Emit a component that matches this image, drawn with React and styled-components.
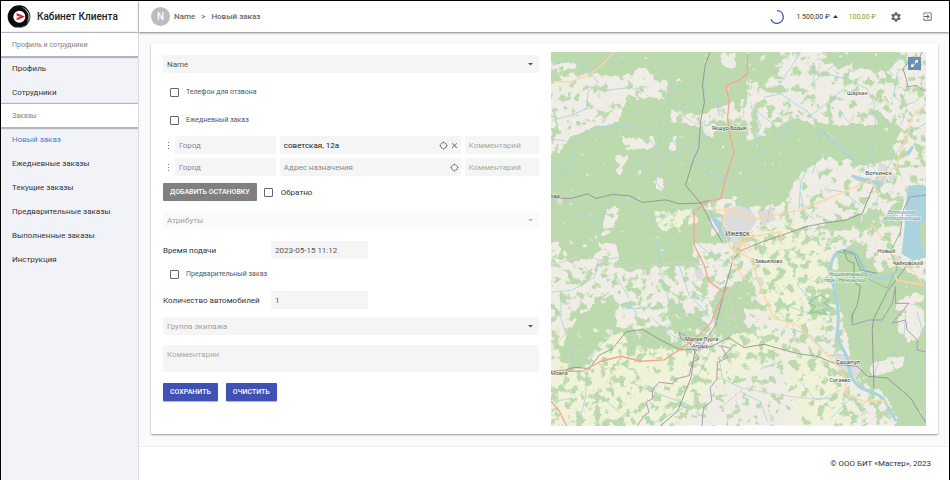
import React, { useState } from 'react'
import styled, { createGlobalStyle, css } from 'styled-components'
import { MdSettings, MdExitToApp, MdLocationSearching, MdClose } from 'react-icons/md'

const sections = [
    { title: 'Профиль и сотрудники', items: ['Профиль', 'Сотрудники'] },
    {
        title: 'Заказы',
        items: [
            'Новый заказ',
            'Ежедневные заказы',
            'Текущие заказы',
            'Предварительные заказы',
            'Выполненные заказы',
            'Инструкция',
        ],
    },
]

function Logo() {
    return (
        <svg width="24" height="24" viewBox="0 0 72 72" aria-hidden="true">
            <circle cx="36" cy="35" r="34" fill="#0c0c0c" />
            <path d="M46 7a31 31 0 0 1 18 19M64 24a30 30 0 0 1-3 31M56 13a29 29 0 0 1 6 34M54 63a33 33 0 0 1-26 4" fill="none" stroke="#fff" strokeWidth="1.6" />
            <circle cx="37" cy="35" r="18" fill="#fff" />
            <path d="M29 24l25 11-25 11z" fill="#e3202c" />
            <path d="M29 32l11 3-11 4z" fill="#fff" />
        </svg>
    )
}

function Caret({ up }) {
    return (
        <svg width="5" height="3" viewBox="0 0 10 6" aria-hidden="true">
            <path d={up ? 'M0 6l5-6 5 6z' : 'M0 0l5 5 5-5z'} fill="currentColor" />
        </svg>
    )
}

function Map() {
    return (
        <MapBox>
            <svg viewBox="0 0 1128 1122" preserveAspectRatio="xMidYMid slice" role="img" aria-label="Карта">
                <defs>
                    {/* grey level = how dense the wood is, noise makes the ragged edges */}
                    <filter id="wood" x="0" y="0" width="100%" height="100%" colorInterpolationFilters="sRGB">
                        <feGaussianBlur in="SourceGraphic" stdDeviation="5" />
                        <feColorMatrix values="0 0 0 0 0  0 0 0 0 0  0 0 0 0 0  1 0 0 0 0" result="density" />
                        <feTurbulence type="fractalNoise" baseFrequency="0.04" numOctaves="5" seed="8" result="noise" />
                        <feComposite in="density" in2="noise" operator="arithmetic" k2="0.9" k3="1.4" k4="-0.35" result="sum" />
                        <feComponentTransfer in="sum" result="mask">
                            <feFuncA type="linear" slope="7" intercept="-4.8" />
                        </feComponentTransfer>
                        <feFlood floodColor="#bcdaae" />
                        <feComposite in2="mask" operator="in" />
                    </filter>
                    <filter id="soft"><feGaussianBlur stdDeviation="14" /></filter>
                </defs>
                <rect width="1128" height="1122" fill="#f0ede6" />
                <g fill="#f0f2d9" filter="url(#soft)">
                    <path d="M0 840l200-20 250 60 200-60 60 60-60 60-200 90-100 92H0z" />
                    <path d="M600 540l140-30 90 90 20 200-60 60-130-60-60-160z" />
                    <path d="M300 490l120-20 20 60-110 20zM700 900h140l80 220H740z" />
                </g>
                <g filter="url(#wood)">
                    <rect width="1128" height="1122" fill="#585858" />
                    <g transform="translate(-15 -19)">
                        <path d="M0 0h600v590H0z" fill="#f4f4f4" />
                        <path d="M0 45l60 0 40 20-20 30-64 5z" fill="#707070" />
                        <path d="M0 115l120-35 110 10 60-30 50 50-30 50-70 10-20 60-90 20-60 30-30 50H0z" fill="#404040" />
                        <path d="M375 190l90 15 130-50v80l-80 5-20 50-30-45-90-15z" fill="#4c4c4c" />
                        <path d="M230 280l90-10 5 35-90 10zM205 330l45 0-30 70zM330 395l25 0-5 45-20-10zM375 270l20 0-5 50-20 0zM520 20l50 0v50l-40-10zM100 420l20 5-15 25z" fill="#202020" />
                        <path d="M180 490l60-10-50 90h-30zM320 500l120-10 20 40-120 30zM480 470l120-20v120H500zM340 95l30 20-10 45-70-5z" fill="#4c4c4c" />
                    </g>
                    <g transform="translate(570 -19)">
                        <path d="M20 20h100l-10 70-50 30-40-10zM250 20h230l-40 60-120-20-70-10z" fill="#d0d0d0" />
                        <path d="M0 290l80-20 70-50 90 20h170l10 110-80 10-60-30-100 40-50 100-140 20z" fill="#f4f4f4" />
                        <path d="M410 190l60 60-10 90-50 10zM250 540l160-50 10 60H200z" fill="#dadada" />
                        <path d="M120 80l120 10 150 70 10 60-140 10-60-20-100-50z" fill="#484848" />
                        <path d="M180 370l150-30 60 70-60 60-110 40-70-20z" fill="#424242" />
                    </g>
                    <g transform="translate(-15 551)">
                        <path d="M210 0h220l20 90-100 0-120 20zM500 180l100-50v160l-90 10z" fill="#efefef" />
                        <path d="M100 240l100-60 10 90-60 60-20 60-60 10-30-50z" fill="#dcdcdc" />
                        <path d="M370 200l100 50 20 40-60 30-60-40zM230 290l110-20 60 60-150 20zM60 0h110l-20 60-90 20z" fill="#c4c4c4" />
                        <path d="M300 380l140-20-20 80-180 90-60-60zM480 430l110-60v200H480z" fill="#404040" />
                    </g>
                    <g transform="translate(570 551)">
                        <path d="M290 60l60-40 60 90 60-20 100 60v430H480l-40-100-100-60-20-130-30-120z" fill="#ffffff" />
                        <path d="M400 380l100-20-20 40-110 30zM470 190l80-30v130l-40 40-40-50z" fill="#303030" />
                        <path d="M480 0h80v60h-80z" fill="#202020" />
                        <path d="M-10 140l40-20 20 80-50 40zM200 190l90-40v90l-60-10z" fill="#b0b0b0" />
                        <path d="M0 370l240 60 60 140H0z" fill="#3e3e3e" />
                    </g>
                </g>
                {/* towns */}
                <g fill="#dcdcdc">
                    <path d="M535 470l30-10 35 15 20 30-20 30-40 15 20 30-25 10-20-40-20-50zM620 480l45-10 10 35-40 15zM985 330l25 10-5 55-25-8zM1010 370l25-5-10 30zM855 900l40 20 40 30-20 30-60-40zM150 195l20 8-15 15zM440 205l20 5-10 15zM430 660l20-10 10 25-20 10zM510 860l15 10-10 10zM620 680l15-5 5 25-15 5zM1030 610l35 20 10 20-40-10zM20 435l15 0-2 25-15-5zM425 875l35-5 20 15-30 10z" />
                </g>
                {/* water */}
                <g fill="#aad3df">
                    <path d="M1070 410c15-14 40-14 58-4v210l-40 10-35-20 8-70 4-60z" />
                    <path d="M476 470l15 25 20 15 20 30 10 25-15 5-20-30-25-40zM905 368l30 8 55 14-10 10-60-14-20-12zM1065 305l20-25 5 8-14 22z" />
                </g>
                <path d="M1128 500l-18 20-4 40 10 32 12 10z" fill="#bcdaae" />
                <path d="M1062 440l-8 30-20 36-40 10 30-56z" fill="#b5dca8" />
                <g fill="none" stroke="#aad3df" strokeLinejoin="round">
                    <path strokeWidth="9" d="M1040 650c-20 40-75 40-95 5-20-30-30-75-80-55-20 10-28 40-24 72 12 50 28 100 20 160-4 40 20 60 30 90 6 40 10 70 45 90 45 15 60 20 75 50l25 46" />
                    <g strokeWidth="2.5" transform="translate(-15 -19)">
                        <path d="M16 60l50-15 50 15 40 50-30 30-4 50-50 20-56 15M116 120l60 15 80-10 30 20M220 20l-30 25-70 40M330 70l45 30 5 35-35 85-5 40 30 5 30 50 20-20 30 30 20 50 60 10 20 25 35 5M380 130l50-5 60-30-25 90M16 440l30-50 50-90 40-50 40-8 70 0 80 20M345 265l-10 55-50 30-60 70-50 80-10 60M340 330l60 10 60 15 60-10M230 450l70 50 30 40 60-50 5 10M340 350l-10 60 60 70M80 470l10 30 60 30M500 430l50-50-60 90M16 280l70 10M530 100l-20 50 10 60" />
                        <path d="M16 355l50 20 60 5M310 280l30 40M90 40l30 40M450 300l40-40M390 190l40-20 40 30" />
                    </g>
                    <g strokeWidth="2.5" transform="translate(570 -19)">
                        <path d="M70 155l50-10 90 60 30 50 100 90 60 20M240 255l-5 70-20 60M330 30l-30 10-80 70 0-60M260 85l60 15 60 30 20 40 5 80-10 60-15 60M0 370l130-100 20-40M310 130l-60 50-40 30M300 200l50 60-40 60M180 20l-60 90M470 80l-10 70 40 40-20 50M180 440l10 60 30 20M560 230l-50 30-60 90-40 90M210 350l-30 60-5 80M0 410l60 20 30 40-10 60M250 430l60 10 50 40M30 180l30 60-20 60M490 30l-50 40 20 20M40 190l100 80 10-20M420 410l-20 110" />
                        <path d="M240 255l40 35 60 55" strokeWidth="5" />
                    </g>
                    <g strokeWidth="2.5" transform="translate(-15 551)">
                        <path d="M16 170l60-5 70-40 10-50 70-10M45 170l0 80 20 60 20 70-10 20M330 10l15 100 25 90 60 40 60 30M400 90l30 90 60 60M240 220l120-5M200 260l-10 40-50 60-20 60 0 60-20 80M320 250l60 50 60 50M160 480l60 50M430 170l60 20M560 160l-30 40-5 70M450 20l60 50 70 20M590 460l-60-30-10-60M250 440l100 40 80 30-120 60M500 340l-60 110M80 0l30 50M250 190l-40-70M16 500l60-10" />
                        <path d="M240 200l30 30M360 0l-5 60" />
                    </g>
                    <g strokeWidth="2.5" transform="translate(570 551)">
                        <path d="M170 150l50 50 60 30M110 200l80 30 90 10M150 280l60 20 50 60 60 0M0 470l60 30 20 60M180 440l40 50 50 0M450 370l40-60 5-70M400 420l20-60M500 350l-10 90-30 50M550 450l-30-80M350 60l40 100 50-10M530 230l20 70M60 400l60-20M330 490l-60 60" />
                    </g>
                </g>
                {/* borders */}
                <g fill="none" stroke="#a99bb0" strokeWidth="3" strokeLinejoin="round">
                    <path d="M1115 0l-10 20-30 10-18 20 10 30 5 25 25-5 22 16 20-4" />
                    <path d="M260 1122l20-30 15-10-10-30 20-10 0-30 20-20 40 5 10-15 40-10 10-40 20-10-25-40 0-20-35-20 5 20 50 10 30 20M515 920l25-30-30-8 20 36-30 15-2 50-20 25 5 40-25 20-5 60 5 20-20 15-10 10" />
                    <path d="M905 785l0 35 50-15 40 0 30-50 10-50 0 50 40 0-50 60 40-10 5 30 30 30 0 30 40 10 20 60 18 10" />
                    <path d="M1128 430l-50 5-20 40-10 80" />
                </g>
                {/* railways */}
                <g fill="none" stroke="#8c8c8c" strokeWidth="2.5" strokeLinejoin="round">
                    <path d="M478 0l-15 40-8 60 6 50-12 60-5 80-15 30-25 80 50 60 30 60 30 50" />
                    <path d="M0 438l60 2 50-14 25 14 50-12 50 4 40 20 70-8 40 12 60-2 30-8" />
                    <path d="M555 590l-10 40-25 90-15 60-10 40-40 60-20 20M0 960l45-5 25-8 45 4 30-40 40-20 40-50 50-8 50 30 60 30 60 0 40-10 50-25 45 30 60-10 100 28 60 8 60 25 60 5 30 30 60 5 70 60 30 50 20 30" />
                    <path d="M435 880l-15 100-20 50-20 50-50 42M545 625l30-30 60-25 60-20 70-25 50-10 70-10 50-20 35-85" />
                    <path d="M1070 640l-60 80-40 80-5 30 5 180M880 595l30 10 20 50 50 10M880 595l10 30 20 10 0 55 20 15-10 55-15 30 0 20" />
                </g>
                {/* roads */}
                <g fill="none" strokeLinejoin="round">
                    <g stroke="#fcd6a4" strokeWidth="4">
                        <path d="M0 90l60 0 50-18 40-30 40-42M1128 155l-45 40-10 50-25 60-10 40-50 30M985 430l-25-45-90 40-120 50-150 30-60-30-60 0M525 470l-10 60 25 60 60 30 30 90 40 90 70 20 60 60 50 50 30 40 10 60 50 20 60-5 20 25M960 515l40 50M570 560l120-20 0 30M1010 620l40 10 40 30 28 40-80-15-10-35M560 565l-15 70 40 50M520 470l50 10" />
                        <path d="M565 570h30M560 580h40M570 560v45M582 560v45M595 540v60" strokeWidth="3" />
                    </g>
                    <path stroke="#f6a48f" strokeWidth="4" d="M590 5l0 60-25 20-40 15 10 50-5 50 10 60 10 40-20 60-20 80-40 10-40 30 0 100 30 60 15 50 40 28M530 705l-25 50-25 60-40 40-40 30-60 40-70 4-60-15-60 15-55 30-60 0-40 0-20 60 50 60 25 50" />
                    <path stroke="#d8d2d4" strokeWidth="3" d="M0 640l100-30 120 40 180-20 60 10M440 830l50-20 60-10M0 890l60-60M520 1060l60-50 100 20 130 15 60-30M360 170l80 50M530 720l30 110" />
                </g>
                <g fill="none" stroke="#8cc78a" strokeWidth="3">
                    <path d="M860 600l60 10 30 70 60 30 30-60-20-50 30-60" />
                    <path d="M790 740l20-10 25 15-15 10 25 15-30 5 15 15-30-10-25 5 20-20-20-10z" strokeWidth="5" strokeOpacity=".7" />
                </g>
                <g fill="#444" stroke="#fff" strokeOpacity=".6" strokeWidth="4" paintOrder="stroke" fontFamily="'Noto Sans', sans-serif" fontSize="16" textAnchor="middle">
                    <text x="920" y="128">Шаркан</text>
                    <text x="534" y="233">Якшур-Бодья</text>
                    <text x="984" y="370" fontSize="18">Воткинск</text>
                    <text x="560" y="553" fontSize="20">Ижевск</text>
                    <text x="654" y="635">Завьялово</text>
                    <text x="1008" y="604">Новый</text>
                    <text x="1072" y="641">Чайковский</text>
                    <text x="453" y="867">Малая Пурга</text>
                    <text x="447" y="890">Агрыз</text>
                    <text x="24" y="971">Можга</text>
                    <text x="12" y="440">Ува</text>
                    <text x="892" y="937" fontSize="18">Сарапул</text>
                    <text x="868" y="991">Сигаево</text>
                    <g fontStyle="italic" fontSize="15">
                        <text x="1054" y="488" fill="#6b93c4">Воткинское</text>
                        <text x="1054" y="506" fill="#6b93c4">водохранилище</text>
                        <text x="886" y="673" fill="#3d9d50">Национальный</text>
                        <text x="886" y="691" fill="#3d9d50">парк "Нечкинский"</text>
                    </g>
                </g>
            </svg>
            <FullScreen type="button" aria-label="На весь экран">
                <svg width="9" height="9" viewBox="0 0 18 18">
                    <path d="M10 2h6v6l-2-2-3 3-2-2 3-3zM8 16H2v-6l2 2 3-3 2 2-3 3z" fill="#fff" />
                </svg>
            </FullScreen>
        </MapBox>
    )
}

function AddressRow({ placeholder, value, clearable }) {
    const [address, setAddress] = useState(value)

    return (
        <Stop>
            <Dots aria-hidden="true"><i /><i /><i /></Dots>
            <Field aria-label="Город" placeholder="Город" $dim="#8a8a8a" />
            <FieldBox>
                <Field aria-label="Адрес" placeholder={placeholder} value={address} onChange={(e) => setAddress(e.target.value)} $dim="#8a8a8a" $dark />
                <IconButton type="button" aria-label="Указать на карте"><MdLocationSearching size={9} /></IconButton>
                {clearable && (
                    <IconButton type="button" aria-label="Убрать адрес" onClick={() => setAddress('')}><MdClose size={9} /></IconButton>
                )}
            </FieldBox>
            <Field aria-label="Комментарий" placeholder="Комментарий" />
        </Stop>
    )
}

function Select({ label, dim, disabled }) {
    return (
        <SelectBox $dim={dim} $disabled={disabled}>
            <select aria-label={label} disabled={disabled}>
                <option>{label}</option>
            </select>
            <Caret />
        </SelectBox>
    )
}

function App() {
    const [active, setActive] = useState('Новый заказ')

    return (
        <Page>
            <GlobalStyle />
            <Sidebar>
                <Brand><Logo />Кабинет Клиента</Brand>
                <nav>
                    {sections.map((section) => (
                        <section key={section.title}>
                            <SectionTitle>{section.title}</SectionTitle>
                            <Menu>
                                {section.items.map((item) => (
                                    <li key={item}>
                                        <MenuLink href="#" $active={item === active} onClick={() => setActive(item)}>{item}</MenuLink>
                                    </li>
                                ))}
                            </Menu>
                        </section>
                    ))}
                </nav>
            </Sidebar>
            <Content>
                <Header>
                    <Avatar>N</Avatar>
                    <Crumbs><span>Name</span><span>&gt;</span><span>Новый заказ</span></Crumbs>
                    <Spinner viewBox="0 0 42 42" aria-hidden="true">
                        <path d="M21 2a19 19 0 1 1-18 26" fill="none" stroke="#3f51b5" strokeWidth="4" />
                    </Spinner>
                    <Balance type="button">1 500,00 ₽ <Caret up /></Balance>
                    <Bonus>100,00 ₽</Bonus>
                    <Tool type="button" aria-label="Настройки"><MdSettings size={12} /></Tool>
                    <Tool type="button" aria-label="Выход"><MdExitToApp size={11} /></Tool>
                </Header>
                <Main>
                    <Card>
                        <Form onSubmit={(e) => e.preventDefault()}>
                            <Select label="Name" />
                            <Check $top={14}><input type="checkbox" />Телефон для отзвона</Check>
                            <Check $top={18}><input type="checkbox" />Ежедневный заказ</Check>
                            <Stops>
                                <AddressRow value="советская, 12а" placeholder="Адрес отправления" clearable />
                                <AddressRow value="" placeholder="Адрес назначения" />
                            </Stops>
                            <Actions $top={7}>
                                <Button type="button" $grey>Добавить остановку</Button>
                                <Check $big><input type="checkbox" />Обратно</Check>
                            </Actions>
                            <Gap $top={10}><Select label="Атрибуты" dim disabled /></Gap>
                            <Labeled $top={12}>
                                <label htmlFor="time">Время подачи</label>
                                <Field id="time" defaultValue="2023-05-15 11:12" />
                            </Labeled>
                            <Check $top={10}><input type="checkbox" />Предварительный заказ</Check>
                            <Labeled $top={12}>
                                <label htmlFor="cars">Количество автомобилей</label>
                                <Field id="cars" defaultValue="1" />
                            </Labeled>
                            <Gap $top={8}><Select label="Группа экипажа" dim /></Gap>
                            <Comment aria-label="Комментарии" placeholder="Комментарии" />
                            <Actions $top={11} $gap={8}>
                                <Button type="submit">Сохранить</Button>
                                <Button type="reset">Очистить</Button>
                            </Actions>
                        </Form>
                        <Map />
                    </Card>
                </Main>
                <Footer>© ООО БИТ «Мастер», 2023</Footer>
            </Content>
        </Page>
    )
}

export default App

const GlobalStyle = createGlobalStyle`
*{
    box-sizing: border-box;
}
body{
    margin: 0;
    font-family: Roboto, sans-serif;
    font-size: 8px;
    color: #333;
}
button, input, select, textarea{
    font: inherit;
    color: inherit;
    border: 0;
    padding: 0;
    margin: 0;
}
button{
    background: none;
    cursor: pointer;
}
svg{
    display: block;
    flex-shrink: 0;
}
`;

const Page = styled.div`
display: grid;
grid-template-columns: 138px 1fr;
min-height: 100vh;
border: 1px solid #000;
background: #fafafa;
`;

const Sidebar = styled.aside`
background: #f2f3f8;
border-right: 1px solid #dcdce0;
`;

const Brand = styled.div`
display: flex;
align-items: center;
gap: 6px;
height: 32px;
padding: 0 6px;
background: #fff;
border-bottom: 1px solid #ddd;
font-size: 10px;
font-weight: 500;
color: #222;
white-space: nowrap;
`;

const SectionTitle = styled.h2`
display: flex;
align-items: center;
height: 23px;
margin: 0;
padding: 0 11px;
background: #fff;
box-shadow: 0 1px 1px 1px #b4b4bd, 0 -1px 1px #b4b4bd;
clip-path: inset(-2px 0 -3px);
font-size: 7px;
font-weight: 400;
color: #808080;
`;

const Menu = styled.ul`
list-style: none;
margin: 0;
padding: 0;
`;

const MenuLink = styled.a`
display: flex;
align-items: center;
height: 24px;
padding: 0 11px;
color: ${({ $active }) => ($active ? '#3f7bd6' : '#333')};
text-decoration: none;
white-space: nowrap;
`;

const Content = styled.div`
display: flex;
flex-direction: column;
min-width: 0;
`;

const Header = styled.header`
display: flex;
align-items: center;
height: 31px;
padding: 0 16px 0 12px;
background: #fff;
box-shadow: 0 1px 2px rgba(0, 0, 0, 0.5);
`;

const Avatar = styled.span`
display: flex;
align-items: center;
justify-content: center;
width: 19px;
height: 19px;
border-radius: 50%;
background: #bdbdbd;
color: #fff;
font-size: 10px;
font-weight: 500;
`;

const Crumbs = styled.div`
display: flex;
gap: 6px;
margin-left: 4px;
margin-right: auto;
font-weight: 500;
color: #666;
`;

const Spinner = styled.svg`
width: 14px;
height: 14px;
margin-right: 12px;
`;

const Balance = styled.button`
display: flex;
align-items: center;
gap: 3px;
font-size: 7px;
color: #333;
`;

const Bonus = styled.span`
margin-left: 11px;
font-size: 7px;
color: #7ba428;
`;

const Tool = styled.button`
display: flex;
margin-left: 14px;
color: #666;

& + &{
    margin-left: 20px;
}
`;

const Main = styled.main`
flex: 1;
padding: 12px 11px 12px 12px;
`;

const Card = styled.div`
display: grid;
grid-template-columns: 1fr 1fr;
gap: 12px;
padding: 8px 12px;
background: #fff;
border-radius: 1px;
box-shadow: 0 1px 2px rgba(0, 0, 0, 0.4);
`;

const Form = styled.form`
padding-top: 3px;
min-width: 0;
`;

const Gap = styled.div`
margin-top: ${({ $top }) => $top}px;
`;

const fieldBg = css`
background: #f5f5f5;
border-radius: 1px;
`;

const Field = styled.input`
${fieldBg}
width: 100%;
min-width: 0;
height: 18px;
padding: 0 4px;
outline: none;
color: ${({ $dark }) => ($dark ? '#222' : '#555')};

&::placeholder{
    color: ${({ $dim }) => $dim || '#aaa'};
    opacity: 1;
}
`;

const FieldBox = styled.div`
${fieldBg}
display: flex;
align-items: center;
gap: 2px;
padding-right: 2px;
`;

const IconButton = styled.button`
display: flex;
color: #666;
`;

const SelectBox = styled.div`
${fieldBg}
display: grid;
align-items: center;
height: 18px;
background: ${({ $disabled }) => ($disabled ? '#fafafa' : '#f5f5f5')};
color: ${({ $disabled }) => ($disabled ? '#bbb' : '#555')};

select, svg{
    grid-area: 1 / 1;
}
select{
    appearance: none;
    width: 100%;
    height: 18px;
    padding: 0 4px;
    background: transparent;
    outline: none;
    opacity: 1;
    color: ${({ $dim }) => ($dim ? '#a0a0a0' : '#555')};
}
svg{
    justify-self: end;
    margin-right: 6px;
    pointer-events: none;
}
`;

const Check = styled.label`
display: flex;
align-items: center;
gap: ${({ $big }) => ($big ? 8 : 7)}px;
height: 10px;
margin-top: ${({ $top = 0 }) => $top}px;
padding-left: 7px;
font-size: ${({ $big }) => ($big ? 8 : 7)}px;
color: ${({ $big }) => ($big ? '#333' : '#555')};

input{
    appearance: none;
    width: 9px;
    height: 9px;
    border: 1px solid #666;
    border-radius: 1px;
    background: #fff;
}
input:checked{
    background: #3f51b5;
}
`;

const Stops = styled.div`
display: grid;
gap: 4px;
margin-top: 11px;
`;

const Stop = styled.div`
display: grid;
grid-template-columns: 8px 101fr 181fr 74fr;
column-gap: 4px;
`;

const Dots = styled.span`
display: flex;
flex-direction: column;
align-items: center;
justify-content: center;
gap: 2px;
padding-left: 3px;

i{
    width: 1px;
    height: 1px;
    background: #777;
}
`;

const Actions = styled.div`
display: flex;
align-items: center;
gap: ${({ $gap = 0 }) => $gap}px;
margin-top: ${({ $top }) => $top}px;
`;

const Button = styled.button`
height: 18px;
padding: 0 7px;
border-radius: 1px;
background: ${({ $grey }) => ($grey ? '#808080' : '#3f51b5')};
box-shadow: ${({ $grey }) => ($grey ? 'none' : '0 1px 1px rgba(0, 0, 0, 0.3)')};
color: #fff;
font-size: 7px;
font-weight: 500;
text-transform: uppercase;
white-space: nowrap;
`;

const Labeled = styled.div`
display: grid;
grid-template-columns: 108px 97px;
align-items: center;
margin-top: ${({ $top }) => $top}px;
`;

const Comment = styled.textarea`
${fieldBg}
display: block;
width: 100%;
height: 27px;
margin-top: 10px;
padding: 5px 4px;
resize: none;
outline: none;

&::placeholder{
    color: #aaa;
    opacity: 1;
}
`;

const MapBox = styled.div`
position: relative;
min-width: 0;
overflow: hidden;

> svg{
    width: 100%;
    height: 100%;
}
`;

const FullScreen = styled.button`
position: absolute;
top: 5px;
right: 5px;
display: flex;
align-items: center;
justify-content: center;
width: 13px;
height: 13px;
background: #6b8fb3;
`;

const Footer = styled.footer`
display: flex;
align-items: center;
justify-content: flex-end;
height: 34px;
padding: 0 18px;
background: #fff;
border-top: 1px solid #eee;
color: #333;
`;
